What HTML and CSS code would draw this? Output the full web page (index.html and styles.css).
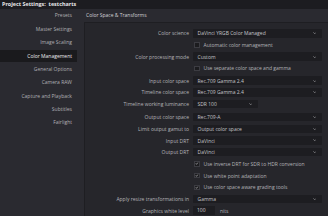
FILE: index.html
```html
<!DOCTYPE html>
<html>
<head>
<meta charset="utf-8">
<link rel="stylesheet" href="styles.css">
</head>
<body>
<div class="app">
  <div class="titlebar">Project Settings:&nbsp; testcharts</div>
  <div class="body">
    <nav class="sidebar">
      <div class="nav-item">Presets</div>
      <div class="nav-item">Master Settings</div>
      <div class="nav-item">Image Scaling</div>
      <div class="nav-item active">Color Management</div>
      <div class="nav-item">General Options</div>
      <div class="nav-item">Camera RAW</div>
      <div class="nav-item">Capture and Playback</div>
      <div class="nav-item">Subtitles</div>
      <div class="nav-item">Fairlight</div>
    </nav>
    <main class="main">
      <div class="section-head">Color Space &amp; Transforms</div>
      <div class="panel">
        <div class="row">
          <span class="label">Color science</span>
          <div class="select"><span>DaVinci YRGB Color Managed</span><svg class="chev" viewBox="0 0 4 2.4"><polyline points="0.4,0.4 2,2 3.6,0.4"/></svg></div>
        </div>
        <div class="row">
          <span class="label"></span>
          <div class="check"><span class="box"></span><span>Automatic color management</span></div>
        </div>
        <div class="row">
          <span class="label">Color processing mode</span>
          <div class="select"><span>Custom</span><svg class="chev" viewBox="0 0 4 2.4"><polyline points="0.4,0.4 2,2 3.6,0.4"/></svg></div>
        </div>
        <div class="row">
          <span class="label"></span>
          <div class="check"><span class="box"></span><span>Use separate color space and gamma</span></div>
        </div>
        <div class="row gap-s">
          <span class="label">Input color space</span>
          <div class="select"><span>Rec.709 Gamma 2.4</span><svg class="chev" viewBox="0 0 4 2.4"><polyline points="0.4,0.4 2,2 3.6,0.4"/></svg></div>
        </div>
        <div class="row">
          <span class="label">Timeline color space</span>
          <div class="select"><span>Rec.709 Gamma 2.4</span><svg class="chev" viewBox="0 0 4 2.4"><polyline points="0.4,0.4 2,2 3.6,0.4"/></svg></div>
        </div>
        <div class="row">
          <span class="label">Timeline working luminance</span>
          <div class="select short"><span>SDR 100</span><svg class="chev" viewBox="0 0 4 2.4"><polyline points="0.4,0.4 2,2 3.6,0.4"/></svg></div>
        </div>
        <div class="row gap-m">
          <span class="label">Output color space</span>
          <div class="select"><span>Rec.709-A</span><svg class="chev" viewBox="0 0 4 2.4"><polyline points="0.4,0.4 2,2 3.6,0.4"/></svg></div>
        </div>
        <div class="row">
          <span class="label">Limit output gamut to</span>
          <div class="select"><span>Output color space</span><svg class="chev" viewBox="0 0 4 2.4"><polyline points="0.4,0.4 2,2 3.6,0.4"/></svg></div>
        </div>
        <div class="row">
          <span class="label">Input DRT</span>
          <div class="select"><span>DaVinci</span><svg class="chev" viewBox="0 0 4 2.4"><polyline points="0.4,0.4 2,2 3.6,0.4"/></svg></div>
        </div>
        <div class="row">
          <span class="label">Output DRT</span>
          <div class="select"><span>DaVinci</span><svg class="chev" viewBox="0 0 4 2.4"><polyline points="0.4,0.4 2,2 3.6,0.4"/></svg></div>
        </div>
        <div class="row">
          <span class="label"></span>
          <div class="check"><span class="box on"><svg viewBox="0 0 6 6"><polyline points="1.3,3.2 2.5,4.4 4.8,1.5"/></svg></span><span>Use inverse DRT for SDR to HDR conversion</span></div>
        </div>
        <div class="row">
          <span class="label"></span>
          <div class="check"><span class="box on"><svg viewBox="0 0 6 6"><polyline points="1.3,3.2 2.5,4.4 4.8,1.5"/></svg></span><span>Use white point adaptation</span></div>
        </div>
        <div class="row">
          <span class="label"></span>
          <div class="check"><span class="box on"><svg viewBox="0 0 6 6"><polyline points="1.3,3.2 2.5,4.4 4.8,1.5"/></svg></span><span>Use color space aware grading tools</span></div>
        </div>
        <div class="row">
          <span class="label">Apply resize transformations in</span>
          <div class="select"><span>Gamma</span><svg class="chev" viewBox="0 0 4 2.4"><polyline points="0.4,0.4 2,2 3.6,0.4"/></svg></div>
        </div>
        <div class="row">
          <span class="label">Graphics white level</span>
          <div class="numfield"><span class="num">100</span><span class="unit">nits</span></div>
        </div>
      </div>
    </main>
  </div>
</div>
</body>
</html>
```

FILE: styles.css
```css
html, body {
  margin: 0;
  padding: 0;
  background: #28282d;
}
body {
  font-family: "Open Sans", "DejaVu Sans", sans-serif;
  font-size: 5px;
  color: #b4b4b8;
  width: 328px;
  height: 216px;
  overflow: hidden;
}
.app {
  display: flex;
  flex-direction: column;
  height: 216px;
}
.titlebar {
  height: 9px;
  line-height: 9px;
  background: #1c1c20;
  color: #e6e6e8;
  font-weight: 700;
  font-size: 5.4px;
  padding-left: 2px;
  flex: none;
}
.body {
  flex: 1;
  display: flex;
  min-height: 0;
}
.sidebar {
  width: 84px;
  flex: none;
  background: #2a2a30;
  padding-top: 0.3px;
}
.nav-item {
  width: 77px;
  box-sizing: border-box;
  height: 13.4px;
  line-height: 13.4px;
  text-align: right;
  padding-right: 5px;
  color: #b0b0b4;
}
.nav-item.active {
  background: #1a1a1d;
  color: #ececee;
  height: 12px;
  line-height: 12px;
  margin: 0.7px 0;
}
.main {
  flex: 1;
  display: flex;
  flex-direction: column;
  min-width: 0;
}
.section-head {
  height: 13px;
  line-height: 13px;
  padding-left: 2px;
  background: #2a2a30;
  color: #d2d2d6;
  flex: none;
}
.panel {
  flex: 1;
  background: #26262b;
  border-top: 1px solid #1e1e22;
  border-left: 1px solid #1e1e22;
  padding: 4.5px 6px 0 0;
}
.row {
  display: grid;
  grid-template-columns: 104px 1fr;
  column-gap: 4px;
  align-items: center;
  height: 11.7px;
}
.row.gap-s { margin-top: 0.5px; }
.row.gap-m { margin-top: 1.5px; }
.label {
  text-align: right;
  color: #b4b4b8;
  white-space: nowrap;
}
.select {
  height: 8.5px;
  background: #1d1d21;
  border-radius: 1px;
  display: flex;
  align-items: center;
  justify-content: space-between;
  padding: 0 6px 0 4.5px;
  color: #c4c4c8;
  white-space: nowrap;
}
.select.short {
  width: 65px;
  box-sizing: border-box;
}
.chev {
  width: 3.5px;
  height: 2.2px;
  fill: none;
  stroke: #a8a8ac;
  stroke-width: 0.7;
}
.check {
  display: flex;
  align-items: center;
  gap: 4px;
  color: #b4b4b8;
  white-space: nowrap;
  padding-left: 1px;
}
.box {
  width: 5.5px;
  height: 5.5px;
  box-sizing: border-box;
  background: #1c1c1f;
  border: 0.5px solid #3c3c42;
  display: flex;
  align-items: center;
  justify-content: center;
  flex: none;
}
.box svg {
  width: 5px;
  height: 5px;
  fill: none;
  stroke: #f0f0f0;
  stroke-width: 1;
}
.numfield {
  display: flex;
  align-items: center;
  gap: 5px;
}
.num {
  width: 22px;
  height: 8.5px;
  line-height: 8.5px;
  box-sizing: border-box;
  padding-left: 4px;
  background: #1d1d21;
  color: #d0d0d4;
}
.unit {
  color: #b4b4b8;
}
```
